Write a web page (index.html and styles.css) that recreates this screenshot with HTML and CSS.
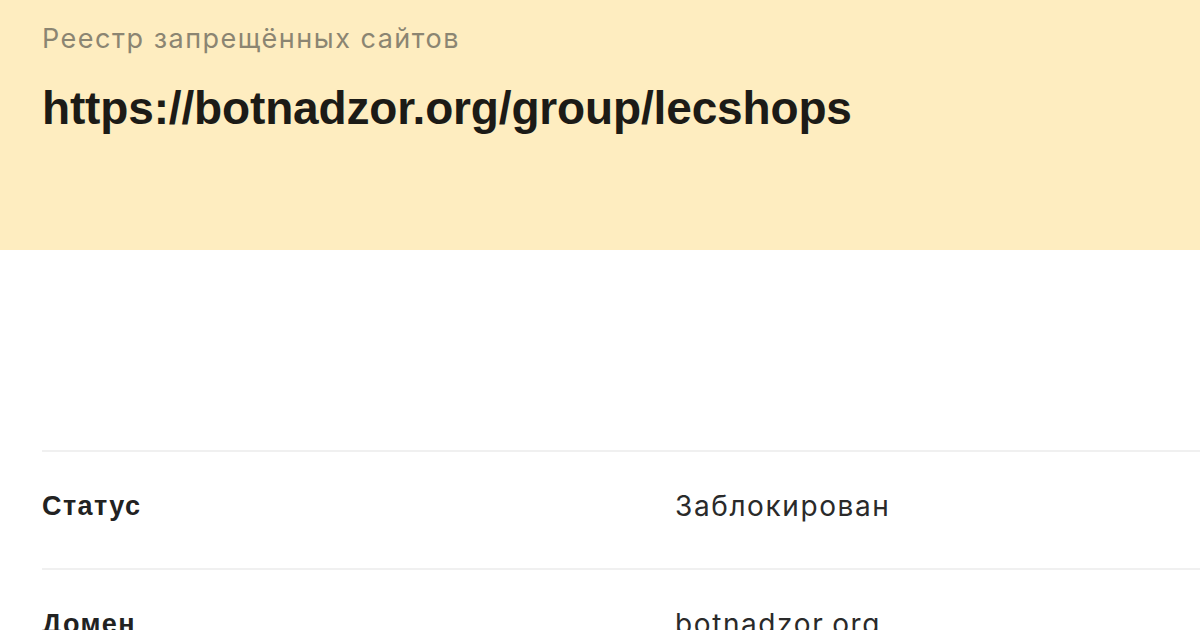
FILE: index.html
```html
<!DOCTYPE html>
<html lang="ru">
<head>
  <meta charset="UTF-8">
  <meta name="viewport" content="width=device-width, initial-scale=1.0">
  <title>botnadzor.org/group/lecshops — Реестр запрещённых сайтов</title>
  <link rel="stylesheet" href="styles.css">
</head>
<body>
  <header class="hero">
    <div class="hero-label">Реестр запрещённых сайтов</div>
    <h1 class="hero-url">https://botnadzor.org/group/lecshops</h1>
  </header>

  <div class="details">
    <div class="row">
      <div class="row-name">Статус</div>
      <div class="row-value">Заблокирован</div>
    </div>
    <div class="row">
      <div class="row-name">Домен</div>
      <div class="row-value">botnadzor.org</div>
    </div>
  </div>
</body>
</html>
```

FILE: styles.css
```css
body {
  margin: 0;
  padding: 0;
  font-family: "Liberation Sans", Arial, sans-serif;
  background-color: #fff;
  color: #222;
  overflow: hidden;
}
.hero {
  background-color: #feedc0;
  height: 250px;
  padding: 22px 42px 0;
  box-sizing: border-box;
}
.hero-label {
  font-family: Inter, "Liberation Sans", sans-serif;
  font-size: 27px;
  line-height: 34px;
  letter-spacing: 1.5px;
  color: #8b8572;
}
.hero-url {
  margin: 26px 0 0;
  font-size: 46px;
  line-height: 52px;
  letter-spacing: -0.15px;
  font-weight: bold;
  color: #1c1b17;
}
.details {
  margin: 200px 0 0 42px;
}
.row {
  display: flex;
  align-items: center;
  padding: 38px 0 46px;
  line-height: 32px;
  border-top: 2px solid #f0f0f0;
  font-size: 27px;
}
.row-name {
  width: 633px;
  font-weight: bold;
  letter-spacing: 1.4px;
  color: #222;
}
.row-value {
  font-family: Inter, "Liberation Sans", sans-serif;
  font-size: 28px;
  letter-spacing: 1.6px;
  color: #2a2a2a;
}
```
